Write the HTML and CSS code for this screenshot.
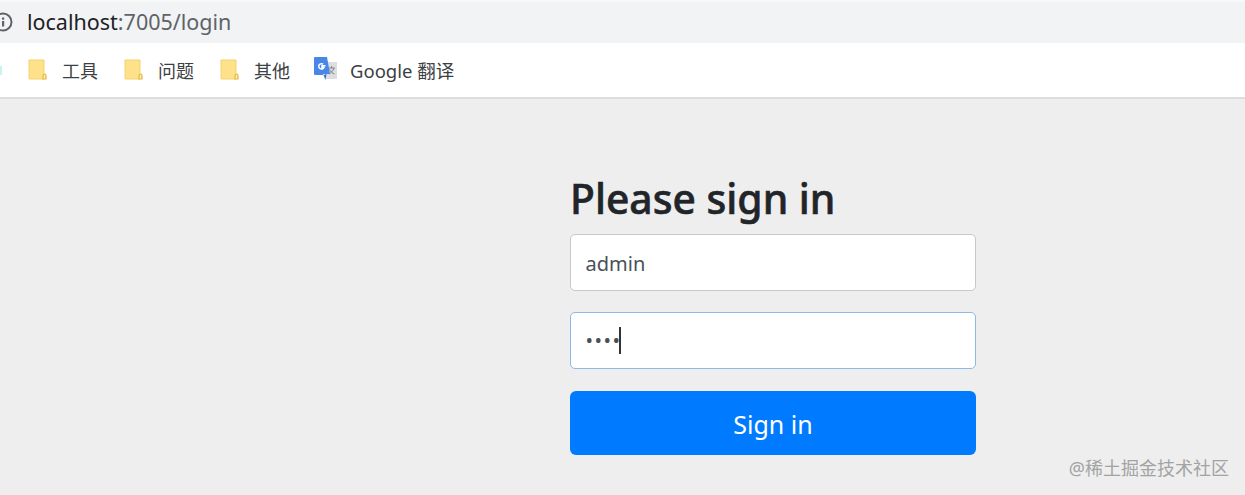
FILE: index.html
```html
<!DOCTYPE html>
<html lang="en">
<head>
   <meta charset="UTF-8">
   <title>Please sign in</title>
   <link rel="stylesheet" href="styles.css">
</head>
<body>
   <div class="address-bar">
      <svg class="info-icon" width="20" height="20" viewBox="0 0 20 20">
         <circle cx="3" cy="10" r="8.500" fill="none" stroke="#5f6368" stroke-width="2"/>
         <rect x="2" y="9" width="2.200" height="5.500" fill="#5f6368"/>
         <rect x="2" y="5.500" width="2.200" height="2.200" fill="#5f6368"/>
      </svg>
      <span class="url"><span class="url-host">localhost</span>:7005/login</span>
   </div>
   <div class="bookmarks">
      <span class="cut-icon"></span>
      <div class="bookmark">
         <svg class="folder" width="20" height="22" viewBox="0 0 20 22">
            <path d="M2 1h15v19H2z" fill="#fee28a" stroke="#f5d271"/>
            <path d="M16 20v-3.500a1.500 1.500 0 0 1 3 0V20z" fill="#fee9a8" stroke="#e5b848" stroke-width="1.200"/>
         </svg>
         <span>工具</span>
      </div>
      <div class="bookmark">
         <svg class="folder" width="20" height="22" viewBox="0 0 20 22">
            <path d="M2 1h15v19H2z" fill="#fee28a" stroke="#f5d271"/>
            <path d="M16 20v-3.500a1.500 1.500 0 0 1 3 0V20z" fill="#fee9a8" stroke="#e5b848" stroke-width="1.200"/>
         </svg>
         <span>问题</span>
      </div>
      <div class="bookmark">
         <svg class="folder" width="20" height="22" viewBox="0 0 20 22">
            <path d="M2 1h15v19H2z" fill="#fee28a" stroke="#f5d271"/>
            <path d="M16 20v-3.500a1.500 1.500 0 0 1 3 0V20z" fill="#fee9a8" stroke="#e5b848" stroke-width="1.200"/>
         </svg>
         <span>其他</span>
      </div>
      <div class="bookmark bookmark-translate">
         <svg class="translate" width="23" height="24" viewBox="0 0 23 24">
            <path d="M10 5h13v17H12z" fill="#dcdee0"/>
            <path d="M14 11h7M17.500 9v2M20 11c-1 3-3 5-5 6M15.500 12.500c1 2 3 4 5 4.500" fill="none" stroke="#80858b" stroke-width="1"/>
            <path d="M1 0h12l3 17H9.500l-.5 1H1a1 1 0 0 1-1-1V1a1 1 0 0 1 1-1z" fill="#4a86e8"/>
            <path d="M9.500 18l3-1-1 6z" fill="#3a6fc4"/>
            <path d="M11.500 8.800H8v1.700h1.900a2.700 2.700 0 1 1-.7-3.200" fill="none" stroke="#fff" stroke-width="1.500"/>
         </svg>
         <span>Google 翻译</span>
      </div>
   </div>
   <main class="page">
      <form class="signin">
         <h2>Please sign in</h2>
         <input class="field" type="text" value="admin">
         <div class="field-wrap">
            <input class="field field-dots field-focus" type="password" value="1234">
            <span class="caret"></span>
         </div>
         <button class="btn" type="button">Sign in</button>
      </form>
      <div class="watermark">@稀土掘金技术社区</div>
   </main>
</body>
</html>
```

FILE: styles.css
```css
* {
   margin: 0;
   padding: 0;
   box-sizing: border-box;
}
html, body {
   height: 100%;
   overflow: hidden;
}
body {
   display: flex;
   flex-direction: column;
   background-color: #eee;
   font-family: "Noto Sans", "Noto Sans CJK SC", sans-serif;
}
.address-bar {
   display: flex;
   align-items: center;
   height: 43px;
   padding-bottom: 2px;
   background-color: #f1f3f4;
   border-top: 2px solid #f7f8f8;
}
.info-icon {
   flex: none;
   margin-right: 7px;
}
.url {
   font-size: 21.500px;
   color: #5f6368;
   white-space: nowrap;
}
.url-host {
   color: #202124;
}
.bookmarks {
   display: flex;
   align-items: center;
   height: 56px;
   background-color: #fff;
   border-bottom: 2px solid #ddd;
}
.cut-icon {
   flex: none;
   width: 2px;
   height: 9px;
   margin-right: 25px;
   background-color: #c9f3ee;
}
.bookmark {
   display: flex;
   align-items: center;
   width: 96px;
   font-size: 18px;
   color: #3c4043;
}
.bookmark span {
   white-space: nowrap;
}
.folder {
   margin-right: 15px;
}
.bookmark-translate {
   width: auto;
   margin-left: -1px;
   font-size: 18.500px;
}
.translate {
   margin-right: 13px;
   margin-top: -3px;
}
.page {
   flex: 1;
   position: relative;
   padding-left: 570px;
}
.signin {
   width: 406px;
   padding-top: 75px;
}
.signin h2 {
   font-size: 40.800px;
   font-weight: 500;
   line-height: 48px;
   color: #212529;
   -webkit-text-stroke: 0.600px #212529;
   margin-bottom: 12px;
}
.field {
   display: block;
   width: 100%;
   height: 57px;
   padding: 2px 15px 0 14.500px;
   font-family: inherit;
   font-size: 20px;
   color: #495057;
   background-color: #fff;
   border: 1px solid #c6c9cc;
   border-radius: 5px;
   outline: none;
}
.field-dots {
   padding-top: 0;
   letter-spacing: 1.500px;
}
.field-wrap {
   position: relative;
   margin-top: 21px;
}
.field-focus {
   border-color: #8db9e8;
}
.caret {
   position: absolute;
   left: 49px;
   top: 15px;
   width: 2px;
   height: 27px;
   background-color: #333;
}
.btn {
   display: block;
   width: 100%;
   height: 64px;
   margin-top: 22px;
   padding-top: 2px;
   font-family: inherit;
   font-size: 25px;
   color: #fff;
   background-color: #007bff;
   border: none;
   border-radius: 6px;
}
.watermark {
   position: absolute;
   right: 16px;
   bottom: 15px;
   font-size: 18px;
   color: #a3a3a3;
   white-space: nowrap;
}
```
